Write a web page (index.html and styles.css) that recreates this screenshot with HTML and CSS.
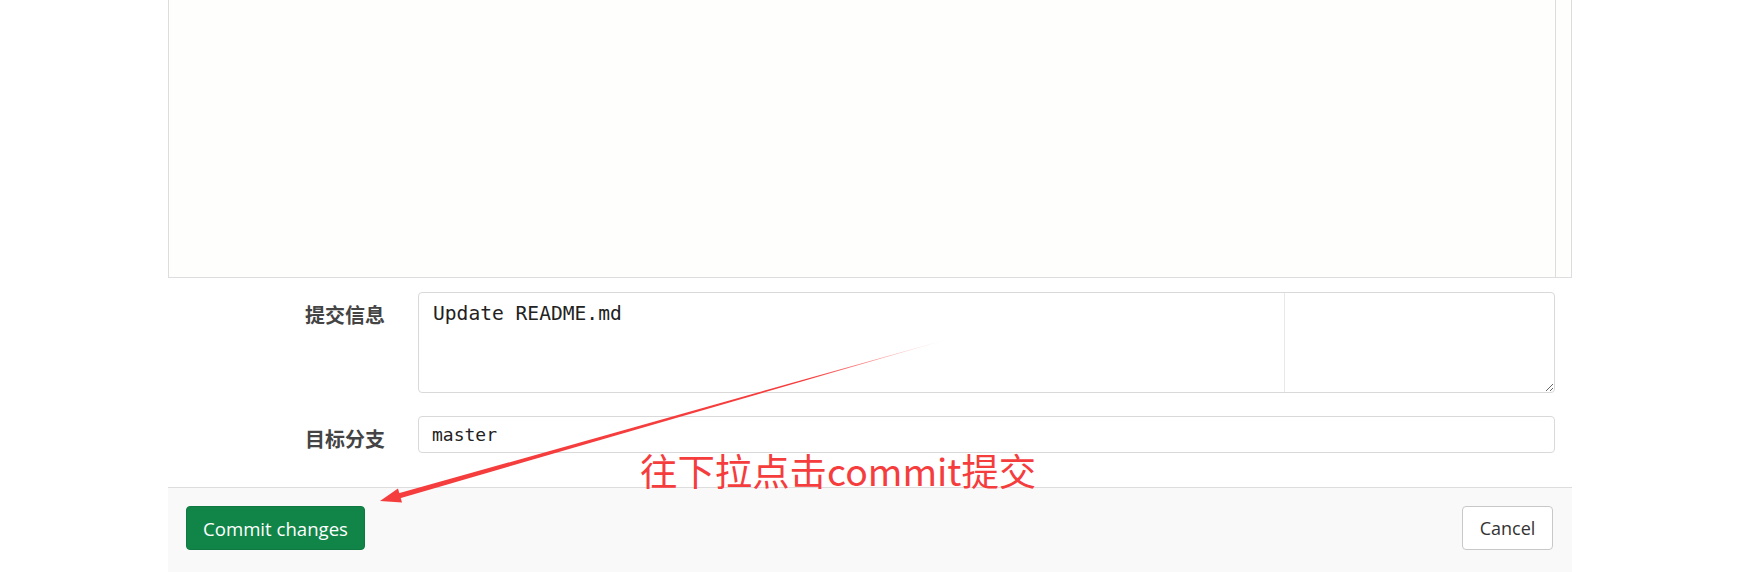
FILE: index.html
```html
<!DOCTYPE html>
<html lang="zh-CN">
<head>
    <meta charset="UTF-8">
    <meta name="viewport" content="width=device-width, initial-scale=1.0">
    <title>Edit README.md</title>
    <link rel="stylesheet" href="styles.css">
</head>
<body>

    <div class="page">
        <div class="edit-box">

            <!-- Editor (scrolled, only the bottom is visible) -->
            <div class="editor">
                <div class="editor-body"></div>
                <div class="editor-gutter"></div>
            </div>

            <!-- Commit form -->
            <div class="commit-form">
                <div class="form-row">
                    <label class="form-label" for="commit-message">提交信息</label>
                    <textarea id="commit-message" class="commit-message">Update README.md</textarea>
                </div>
                <div class="form-row">
                    <label class="form-label" for="branch-name">目标分支</label>
                    <input type="text" id="branch-name" class="branch-name" value="master">
                </div>
            </div>

            <!-- Actions -->
            <div class="form-actions">
                <button class="btn btn-commit">Commit changes</button>
                <button class="btn btn-cancel">Cancel</button>
            </div>
        </div>
    </div>

    <!-- Annotation -->
    <div class="note">往下拉点击commit提交</div>
    <svg class="note-arrow" width="1737" height="572" viewBox="0 0 1737 572">
        <defs>
            <linearGradient id="fade" x1="945" y1="340" x2="395" y2="497" gradientUnits="userSpaceOnUse">
                <stop offset="0" stop-color="#f53d3d" stop-opacity="0.15"/>
                <stop offset="0.25" stop-color="#f53d3d" stop-opacity="1"/>
                <stop offset="1" stop-color="#f53d3d"/>
            </linearGradient>
        </defs>
        <polygon points="945,340 395.8,499.4 394.2,494.6" fill="url(#fade)"/>
        <polygon points="380,501 402,502.5 398,488.5" fill="#f53d3d"/>
    </svg>

</body>
</html>
```

FILE: styles.css
```css
* {
    margin: 0;
    padding: 0;
    box-sizing: border-box;
}
body {
    background: #fff;
    font-family: "Open Sans", "Noto Sans CJK SC", sans-serif;
    color: #333;
    width: 1737px;
    height: 572px;
    overflow: hidden;
    position: relative;
}
.page {
    padding-left: 168px;
}
.edit-box {
    width: 1404px;
}

/* editor */
.editor {
    display: flex;
    height: 278px;
    border: 1px solid #ddd;
    border-top: none;
    background: #fefefc;
}
.editor-body {
    flex: 1;
}
.editor-gutter {
    width: 16px;
    border-left: 1px solid #ddd;
    background: #fefefc;
}

/* form */
.commit-form {
    padding: 14px 0 34px;
    display: flex;
    flex-direction: column;
    gap: 23px;
}
.form-row {
    display: flex;
}
.form-label {
    width: 250px;
    padding-right: 33px;
    padding-top: 9px;
    text-align: right;
    font-family: "Noto Sans CJK SC", sans-serif;
    font-weight: bold;
    font-size: 20px;
    line-height: 28px;
    color: #444;
}
.commit-message {
    width: 1137px;
    height: 101px;
    border: 1px solid #d9d9d9;
    border-radius: 4px;
    padding: 8px 14px;
    font-family: "DejaVu Sans Mono", monospace;
    font-size: 19.6px;
    line-height: 26px;
    color: #222;
    background: #fff linear-gradient(to right, transparent 865px, #e8e8e8 865px, #e8e8e8 866px, transparent 866px);
    resize: vertical;
    outline: none;
}
.branch-name {
    width: 1137px;
    height: 37px;
    border: 1px solid #d9d9d9;
    border-radius: 4px;
    padding: 0 13px;
    font-family: "DejaVu Sans Mono", monospace;
    font-size: 18px;
    color: #222;
    outline: none;
}

/* actions */
.form-actions {
    display: flex;
    justify-content: space-between;
    padding: 18px 19px 30px 18px;
    border-top: 1px solid #ddd;
    background: #f9f9f9;
}
.btn {
    height: 44px;
    border-radius: 4px;
    font-family: "Open Sans", sans-serif;
    font-size: 18px;
    cursor: pointer;
}
.btn-commit {
    width: 179px;
    background: #118548;
    border: 1px solid #0e7a41;
    color: #fff;
    font-size: 18.6px;
}
.btn-cancel {
    width: 91px;
    background: #fff;
    border: 1px solid #c8c8c8;
    color: #333;
}

/* annotation */
.note {
    position: absolute;
    left: 640px;
    top: 445px;
    font-family: "Noto Sans CJK SC", sans-serif;
    font-size: 37.4px;
    line-height: 50px;
    color: #f53d3d;
    white-space: nowrap;
}
.note-arrow {
    position: absolute;
    left: 0;
    top: 0;
    pointer-events: none;
}
```
